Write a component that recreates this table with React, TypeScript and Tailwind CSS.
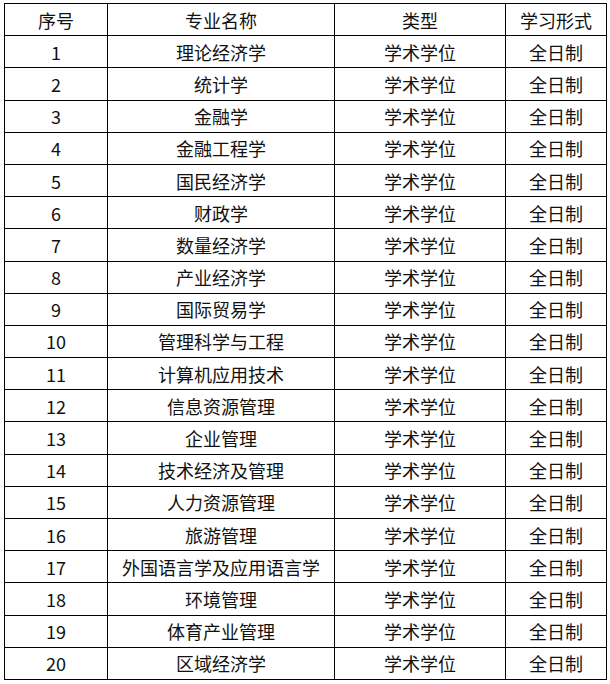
import React from "react";

const names = [
  "理论经济学",
  "统计学",
  "金融学",
  "金融工程学",
  "国民经济学",
  "财政学",
  "数量经济学",
  "产业经济学",
  "国际贸易学",
  "管理科学与工程",
  "计算机应用技术",
  "信息资源管理",
  "企业管理",
  "技术经济及管理",
  "人力资源管理",
  "旅游管理",
  "外国语言学及应用语言学",
  "环境管理",
  "体育产业管理",
  "区域经济学",
];

export default function App() {
  return (
    <div className="bg-white w-[610px] h-[684px] pt-[3px] pl-[4px]">
      <table
        className="table-fixed border-collapse border border-black text-[18px] text-[#111] text-center w-[602px]"
        style={{ fontFamily: '"Microsoft YaHei", "Noto Sans CJK SC", sans-serif' }}
      >
        <colgroup>
          <col className="w-[103px]" />
          <col className="w-[227px]" />
          <col className="w-[171px]" />
          <col className="w-[101px]" />
        </colgroup>
        <tbody>
          <tr className="h-[32.2px]">
            <td className="border border-black p-0 leading-none">序号</td>
            <td className="border border-black p-0 leading-none">专业名称</td>
            <td className="border border-black p-0 leading-none">类型</td>
            <td className="border border-black p-0 leading-none">学习形式</td>
          </tr>
          {names.map((n, i) => (
            <tr key={i} className="h-[32.2px]">
              <td className="border border-black p-0 leading-none">{i + 1}</td>
              <td className="border border-black p-0 leading-none">{n}</td>
              <td className="border border-black p-0 leading-none">学术学位</td>
              <td className="border border-black p-0 leading-none">全日制</td>
            </tr>
          ))}
        </tbody>
      </table>
    </div>
  );
}
